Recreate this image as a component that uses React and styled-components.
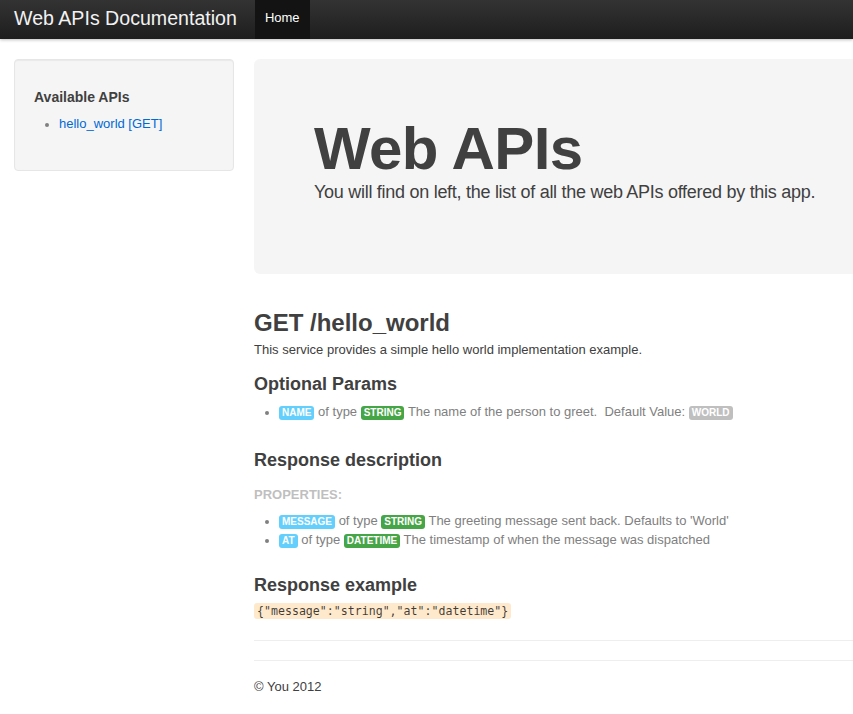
import React from 'react';
import styled, { createGlobalStyle } from 'styled-components';

const GlobalStyle = createGlobalStyle`
  html, body {
    margin: 0;
    padding: 0;
    overflow-x: hidden;
    background: #fff;
  }
  body {
    font-family: "Liberation Sans", Arial, Helvetica, sans-serif;
    font-size: 13px;
    line-height: 18px;
    color: #404040;
  }
`;

const params = [
  { name: 'name', type: 'string', text: 'The name of the person to greet.', def: 'world' },
];

const properties = [
  { name: 'message', type: 'string', text: "The greeting message sent back. Defaults to 'World'" },
  { name: 'at', type: 'datetime', text: 'The timestamp of when the message was dispatched' },
];

const App = () => {
  return (
    <>
      <GlobalStyle />
      <TopBar>
        <Brand href="#">Web APIs Documentation</Brand>
        <NavLink href="#" $active>Home</NavLink>
      </TopBar>

      <Page>
        <Sidebar>
          <SideTitle>Available APIs</SideTitle>
          <List $top={9} $bottom={18}>
            <li><Link href="#">hello_world [GET]</Link></li>
          </List>
        </Sidebar>

        <Content>
          <Hero>
            <HeroTitle>Web APIs</HeroTitle>
            <HeroText>You will find on left, the list of all the web APIs offered by this app.</HeroText>
          </Hero>

          <Endpoint>GET /hello_world</Endpoint>
          <Text>This service provides a simple hello world implementation example.</Text>

          <SectionTitle $top={12}>Optional Params</SectionTitle>
          <List $top={5} $bottom={25}>
            {params.map((p) => (
              <li key={p.name}>
                <Label $kind="info">{p.name}</Label> of type <Label $kind="success">{p.type}</Label> {p.text}&nbsp; Default Value: <Label>{p.def}</Label>
              </li>
            ))}
          </List>

          <SectionTitle>Response description</SectionTitle>
          <SubTitle>Properties:</SubTitle>
          <List $top={8} $bottom={22}>
            {properties.map((p) => (
              <li key={p.name}>
                <Label $kind="info">{p.name}</Label> of type <Label $kind="success">{p.type}</Label> {p.text}
              </li>
            ))}
          </List>

          <SectionTitle>Response example</SectionTitle>
          <Text $top={3}>
            <Code>{'{"message":"string","at":"datetime"}'}</Code>
          </Text>

          <Rule />
          <Footer>© You 2012</Footer>
        </Content>
      </Page>
    </>
  );
};

export default App;

const TopBar = styled.div`
  display: flex;
  align-items: stretch;
  height: 39px;
  background-color: #222;
  background-image: linear-gradient(to bottom, #333, #1e1e1e);
  box-shadow: 0 1px 3px rgba(0, 0, 0, 0.25);
`;

const Brand = styled.a`
  display: block;
  padding: 0 18px 0 14px;
  font-size: 19.6px;
  line-height: 36px;
  color: #f2f2f2;
  text-decoration: none;
  white-space: nowrap;
`;

const NavLink = styled.a`
  display: block;
  padding: 0 10px 3px;
  font-size: 13px;
  line-height: 36px;
  color: ${(props) => (props.$active ? '#fff' : '#bfbfbf')};
  background-color: ${(props) => (props.$active ? '#131313' : 'transparent')};
  text-decoration: none;
`;

const Page = styled.div`
  display: flex;
  align-items: flex-start;
  gap: 20px;
  width: 940px;
  padding: 20px 0 0 14px;
`;

const Sidebar = styled.div`
  flex: 0 0 220px;
  box-sizing: border-box;
  padding: 19px;
  background-color: #f5f5f5;
  border: 1px solid #e6e6e6;
  border-radius: 4px;
  box-shadow: inset 0 1px 1px rgba(0, 0, 0, 0.05);
`;

const SideTitle = styled.h5`
  margin: 9px 0 0;
  font-size: 14px;
  line-height: 18px;
  font-weight: bold;
  color: #404040;
`;

const List = styled.ul`
  margin: ${(props) => props.$top || 0}px 0 ${(props) => props.$bottom || 0}px 25px;
  padding: 0;

  li {
    line-height: 18px;
    color: #808080;
  }
  li::marker {
    font-size: 12px;
  }
`;

const Link = styled.a`
  color: #0069d6;
  text-decoration: none;
`;

const Content = styled.div`
  flex: 0 0 700px;
  min-width: 0;
`;

const Hero = styled.div`
  padding: 60px;
  margin-bottom: 31px;
  background-color: #f5f5f5;
  border-radius: 6px;
`;

const HeroTitle = styled.h1`
  margin: 0;
  font-size: 60px;
  line-height: 60px;
  font-weight: bold;
  letter-spacing: -0.6px;
  color: #404040;
`;

const HeroText = styled.p`
  margin: 0 0 8px;
  font-size: 18px;
  line-height: 27px;
  font-weight: 300;
  letter-spacing: -0.28px;
  color: #404040;
`;

const Endpoint = styled.h2`
  margin: 0;
  font-size: 24px;
  line-height: 36px;
  font-weight: bold;
  color: #404040;
`;

const Text = styled.p`
  margin: ${(props) => props.$top || 0}px 0 9px;
  font-size: 13px;
  line-height: 18px;
`;

const SectionTitle = styled.h3`
  margin: ${(props) => props.$top || 0}px 0 0;
  font-size: 18px;
  line-height: 27px;
  font-weight: bold;
  color: #404040;
`;

const SubTitle = styled.h6`
  margin: 12px 0 0;
  font-size: 13px;
  line-height: 18px;
  font-weight: bold;
  text-transform: uppercase;
  color: #bfbfbf;
`;

const labelColors = {
  info: '#62cffc',
  success: '#46a546',
  default: '#bfbfbf',
};

const Label = styled.span`
  padding: 1px 3px 2px;
  font-size: 10px;
  font-weight: bold;
  color: #fff;
  text-transform: uppercase;
  white-space: nowrap;
  background-color: ${(props) => labelColors[props.$kind || 'default']};
  border-radius: 3px;
`;

const Code = styled.code`
  padding: 1px 3px;
  font-family: "DejaVu Sans Mono", "Liberation Mono", monospace;
  font-size: 11.6px;
  color: rgba(0, 0, 0, 0.75);
  background-color: #fee9cc;
  border-radius: 3px;
`;

const Rule = styled.hr`
  margin: 20px 0 19px;
  border: 0;
  border-bottom: 1px solid #eee;
`;

const Footer = styled.footer`
  padding-top: 17px;
  border-top: 1px solid #eee;
  line-height: 18px;
  margin-bottom: 18px;
`;
